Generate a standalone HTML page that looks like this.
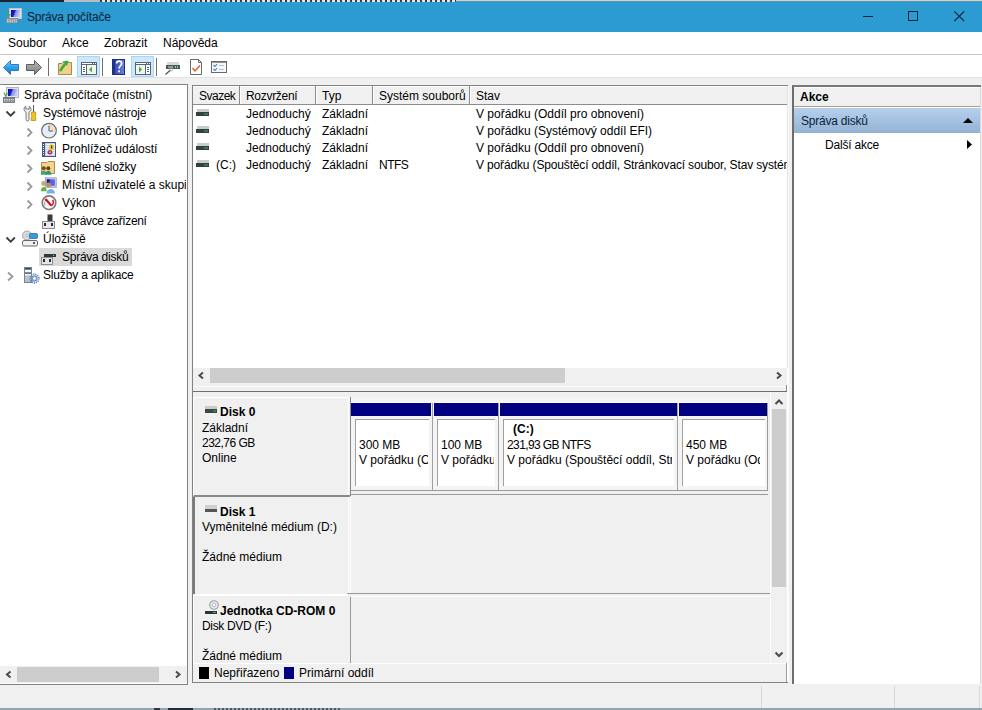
<!DOCTYPE html>
<html><head><meta charset="utf-8">
<style>
*{margin:0;padding:0;box-sizing:border-box}
html,body{width:982px;height:710px;overflow:hidden;background:#f0f0f0;position:relative;font-family:"Liberation Sans",sans-serif;font-size:12px;color:#000}
.a{position:absolute}
.t{position:absolute;white-space:nowrap;line-height:14px;font-size:12px}
.b{font-weight:bold}
svg{position:absolute;overflow:visible}
</style></head><body>

<!-- top strip from window behind -->
<div class="a" style="left:0;top:0;width:982px;height:2px;background:#2b9bd1"></div>
<div class="a" style="left:0;top:0;width:64px;height:2px;background:#1c2430"></div>
<div class="a" style="left:64px;top:0;width:36px;height:2px;background:#b8bcc0"></div>
<div class="a" style="left:100px;top:0;width:356px;height:2px;background:repeating-linear-gradient(90deg,#3a3e44 0 2px,#e4e6e8 2px 5px)"></div>
<div class="a" style="left:456px;top:0;width:526px;height:1px;background:#c4d6de"></div>
<div class="a" style="left:456px;top:1px;width:526px;height:1px;background:#6590a6"></div>

<!-- title bar -->
<div class="a" style="left:0;top:2px;width:982px;height:30px;background:#2b9bd1"></div>
<div class="t" style="left:27px;top:10px;color:#0b1d38;letter-spacing:-0.2px">Správa počítače</div>

<!-- menu bar -->
<div class="a" style="left:0;top:32px;width:982px;height:22px;background:#fff"></div>
<div class="a" style="left:0;top:54px;width:982px;height:1px;background:#c8c8c8"></div>
<div class="t" style="left:8px;top:36px">Soubor</div>
<div class="t" style="left:62px;top:36px">Akce</div>
<div class="t" style="left:104px;top:36px">Zobrazit</div>
<div class="t" style="left:163px;top:36px">Nápověda</div>

<!-- toolbar -->
<div class="a" style="left:0;top:55px;width:982px;height:22px;background:#fff"></div>
<div class="a" style="left:0;top:77px;width:982px;height:1px;background:#e3e3e3"></div>

<!-- left panel -->
<div class="a" style="left:0;top:84px;width:188px;height:601px;background:#fff;border-top:1px solid #828282;border-right:1px solid #828282;border-bottom:1px solid #828282"></div>

<!-- middle panel -->
<div class="a" style="left:192px;top:85px;width:596px;height:598px;background:#fff;border:1px solid #828282;border-right:none"></div>

<!-- actions panel -->
<div class="a" style="left:792px;top:85px;width:189px;height:599px;background:#fff;border-top:2px solid #7a7a7a;border-left:2px solid #6e6e6e"></div>
<div class="a" style="left:788px;top:86px;width:1px;height:596px;background:#fafafa"></div>


<!-- window controls -->
<div class="a" style="left:863px;top:16px;width:10px;height:1px;background:#0b1d38"></div>
<div class="a" style="left:908px;top:11px;width:10px;height:10px;border:1px solid #0b1d38"></div>
<svg style="left:954px;top:11px" width="11" height="11"><path d="M0.3 0.3L10.2 10.2M10.2 0.3L0.3 10.2" stroke="#0b1d38" stroke-width="1.1"/></svg>

<!-- tree -->
<div class="t" style="left:24px;top:88px;letter-spacing:-0.11px">Správa počítače (místní)</div>
<div class="t" style="left:43px;top:106px;letter-spacing:-0.11px">Systémové nástroje</div>
<div class="t" style="left:62px;top:124px">Plánovač úloh</div>
<div class="t" style="left:62px;top:142px">Prohlížeč událostí</div>
<div class="t" style="left:62px;top:160px;letter-spacing:-0.24px">Sdílené složky</div>
<div class="a" style="left:60px;top:175px;width:126px;height:18px;overflow:hidden"><div class="t" style="left:2px;top:3px">Místní uživatelé a skupiny</div></div>
<div class="t" style="left:62px;top:196px">Výkon</div>
<div class="t" style="left:62px;top:214px;letter-spacing:-0.34px">Správce zařízení</div>
<div class="t" style="left:43px;top:232px">Úložiště</div>
<div class="a" style="left:39px;top:248px;width:93px;height:18px;background:#d9d9d9"></div>
<div class="t" style="left:62px;top:250px;letter-spacing:-0.25px">Správa disků</div>
<div class="t" style="left:43px;top:268px;letter-spacing:-0.17px">Služby a aplikace</div>

<!-- list header -->
<div class="a" style="left:193px;top:86px;width:594px;height:19px;background:#f0f0f0;border-top:1px solid #fff;border-bottom:1px solid #8c8c8c"></div>
<div class="t" style="left:199px;top:89px;letter-spacing:-0.5px">Svazek</div>
<div class="t" style="left:246px;top:89px;letter-spacing:-0.3px">Rozvržení</div>
<div class="t" style="left:322px;top:89px">Typ</div>
<div class="t" style="left:379px;top:89px">Systém souborů</div>
<div class="t" style="left:476px;top:89px">Stav</div>
<div class="a" style="left:239px;top:86px;width:1px;height:18px;background:#8c8c8c"></div><div class="a" style="left:240px;top:86px;width:1px;height:18px;background:#fff"></div>
<div class="a" style="left:315px;top:86px;width:1px;height:18px;background:#8c8c8c"></div><div class="a" style="left:316px;top:86px;width:1px;height:18px;background:#fff"></div>
<div class="a" style="left:372px;top:86px;width:1px;height:18px;background:#8c8c8c"></div><div class="a" style="left:373px;top:86px;width:1px;height:18px;background:#fff"></div>
<div class="a" style="left:469px;top:86px;width:1px;height:18px;background:#8c8c8c"></div><div class="a" style="left:470px;top:86px;width:1px;height:18px;background:#fff"></div>

<!-- list rows -->
<div class="t" style="left:246px;top:107px">Jednoduchý</div>
<div class="t" style="left:322px;top:107px">Základní</div>
<div class="t" style="left:476px;top:107px">V pořádku (Oddíl pro obnovení)</div>
<div class="t" style="left:246px;top:124px">Jednoduchý</div>
<div class="t" style="left:322px;top:124px">Základní</div>
<div class="t" style="left:476px;top:124px">V pořádku (Systémový oddíl EFI)</div>
<div class="t" style="left:246px;top:141px">Jednoduchý</div>
<div class="t" style="left:322px;top:141px">Základní</div>
<div class="t" style="left:476px;top:141px">V pořádku (Oddíl pro obnovení)</div>
<div class="t" style="left:216px;top:158px">(C:)</div>
<div class="t" style="left:246px;top:158px">Jednoduchý</div>
<div class="t" style="left:322px;top:158px">Základní</div>
<div class="t" style="left:379px;top:158px;letter-spacing:-0.5px">NTFS</div>
<div class="a" style="left:470px;top:155px;width:317px;height:18px;overflow:hidden"><div class="t" style="left:6px;top:3px;letter-spacing:-0.15px">V pořádku (Spouštěcí oddíl, Stránkovací soubor, Stav systému)</div></div>

<!-- list hscroll -->
<div class="a" style="left:193px;top:368px;width:594px;height:15px;background:#f0f0f0"></div>
<div class="a" style="left:210px;top:368px;width:355px;height:15px;background:#cdcdcd"></div>
<div class="a" style="left:193px;top:383px;width:594px;height:8px;background:#f0f0f0"></div>
<div class="a" style="left:193px;top:391px;width:594px;height:1px;background:#6e6e6e"></div>

<!-- disk area -->
<div class="a" style="left:193px;top:392px;width:594px;height:271px;background:#f0f0f0"></div>
<!-- disk0 label box (raised) -->
<div class="a" style="left:193px;top:397px;width:157px;height:100px;border-top:1px solid #fff;border-left:1px solid #fff;border-bottom:2px solid #8a8a8a"></div>
<div class="a" style="left:348px;top:397px;width:1px;height:97px;background:#fff"></div>
<div class="a" style="left:350px;top:397px;width:1px;height:99px;background:#8a8a8a"></div>
<!-- partition frame disk0 -->
<div class="a" style="left:351px;top:397px;width:417px;height:94px;background:#f4f4f4;border-bottom:1px solid #9a9a9a"></div>
<div class="a" style="left:767px;top:403px;width:1px;height:88px;background:#9a9a9a"></div>
<div class="a" style="left:351px;top:402px;width:416px;height:1px;background:#fff"></div>
<div class="a" style="left:351px;top:494px;width:417px;height:1px;background:#9a9a9a"></div>
<div class="a" style="left:432px;top:403px;width:1px;height:87px;background:#a0a0a0"></div>
<div class="a" style="left:498px;top:403px;width:1px;height:87px;background:#a0a0a0"></div>
<div class="a" style="left:677px;top:403px;width:1px;height:87px;background:#a0a0a0"></div>
<!-- disk1 label box (sunken) -->
<div class="a" style="left:193px;top:497px;width:2px;height:97px;background:#7a7a7a"></div>
<div class="a" style="left:195px;top:594px;width:153px;height:1px;background:#fff"></div>
<div class="a" style="left:348px;top:497px;width:1px;height:97px;background:#fff"></div>
<div class="a" style="left:350px;top:497px;width:1px;height:97px;background:#fff"></div>
<div class="a" style="left:347px;top:593px;width:424px;height:1px;background:#9a9a9a"></div>
<div class="a" style="left:351px;top:596px;width:420px;height:1px;background:#fff"></div>
<!-- cdrom label box (raised) -->
<div class="a" style="left:193px;top:595px;width:155px;height:1px;background:#fff"></div>
<div class="a" style="left:193px;top:595px;width:1px;height:68px;background:#fff"></div>
<div class="a" style="left:350px;top:597px;width:1px;height:66px;background:#9a9a9a"></div>

<!-- disk 0 label -->
<div class="t b" style="left:220px;top:405px">Disk 0</div>
<div class="t" style="left:202px;top:421px">Základní</div>
<div class="t" style="left:202px;top:436px;letter-spacing:-0.5px">232,76 GB</div>
<div class="t" style="left:202px;top:451px">Online</div>

<!-- partitions -->
<div class="a" style="left:351px;top:403px;width:80px;height:13px;background:#000080"></div>
<div class="a" style="left:434px;top:403px;width:64px;height:13px;background:#000080"></div>
<div class="a" style="left:500px;top:403px;width:177px;height:13px;background:#000080"></div>
<div class="a" style="left:679px;top:403px;width:88px;height:13px;background:#000080"></div>

<div class="a" style="left:355px;top:419px;width:74px;height:67px;background:#fff;border-top:1px solid #a0a0a0;border-left:1px solid #a0a0a0"></div>
<div class="a" style="left:437px;top:419px;width:58px;height:67px;background:#fff;border-top:1px solid #a0a0a0;border-left:1px solid #a0a0a0"></div>
<div class="a" style="left:503px;top:419px;width:171px;height:67px;background:#fff;border-top:1px solid #a0a0a0;border-left:1px solid #a0a0a0"></div>
<div class="a" style="left:682px;top:419px;width:83px;height:67px;background:#fff;border-top:1px solid #a0a0a0;border-left:1px solid #a0a0a0"></div>

<div class="a" style="left:358px;top:438px;width:70px;height:30px;overflow:hidden"><div class="t" style="left:1px;top:0">300 MB</div><div class="t" style="left:1px;top:15px">V pořádku (Oddíl pro obnovení)</div></div>
<div class="a" style="left:440px;top:438px;width:54px;height:30px;overflow:hidden"><div class="t" style="left:1px;top:0">100 MB</div><div class="t" style="left:1px;top:15px">V pořádku (Systémový oddíl EFI)</div></div>
<div class="t b" style="left:513px;top:422px">(C:)</div>
<div class="a" style="left:506px;top:438px;width:166px;height:30px;overflow:hidden"><div class="t" style="left:1px;top:0;letter-spacing:-0.6px">231,93 GB NTFS</div><div class="t" style="left:1px;top:15px">V pořádku (Spouštěcí oddíl, Stránkovací soubor)</div></div>
<div class="a" style="left:685px;top:438px;width:75px;height:30px;overflow:hidden"><div class="t" style="left:1px;top:0">450 MB</div><div class="t" style="left:1px;top:15px">V pořádku (Oddíl pro obnovení)</div></div>

<!-- disk 1 label -->
<div class="t b" style="left:220px;top:505px">Disk 1</div>
<div class="t" style="left:202px;top:520px">Vyměnitelné médium (D:)</div>
<div class="t" style="left:202px;top:550px">Žádné médium</div>

<!-- cd-rom label -->
<div class="t b" style="left:220px;top:604px">Jednotka CD-ROM 0</div>
<div class="t" style="left:202px;top:619px;letter-spacing:-0.35px">Disk DVD (F:)</div>
<div class="t" style="left:202px;top:649px">Žádné médium</div>

<!-- vscroll -->
<div class="a" style="left:771px;top:392px;width:15px;height:271px;background:#f0f0f0"></div>
<div class="a" style="left:770px;top:392px;width:1px;height:271px;background:#fcfcfc"></div>
<div class="a" style="left:772px;top:409px;width:14px;height:178px;background:#cdcdcd"></div>

<!-- legend -->
<div class="a" style="left:193px;top:663px;width:594px;height:19px;background:#f0f0f0;border-top:1px solid #fff"></div>
<div class="a" style="left:199px;top:667px;width:10px;height:12px;background:#000"></div>
<div class="t" style="left:214px;top:666px">Nepřiřazeno</div>
<div class="a" style="left:284px;top:667px;width:10px;height:12px;background:#000080"></div>
<div class="t" style="left:299px;top:666px">Primární oddíl</div>

<!-- actions -->
<div class="a" style="left:794px;top:87px;width:186px;height:20px;background:linear-gradient(#fafafa 0 1px,#f0f0f0 1px);border-bottom:1px solid #a0a0a0"></div>
<div class="t b" style="left:800px;top:90px">Akce</div>
<div class="a" style="left:794px;top:108px;width:186px;height:25px;background:linear-gradient(#bccbdc 0 1px,#b4cfec 1px,#94b4d6 24px,#9aacc6 24px)"></div>
<div class="t" style="left:801px;top:114px;color:#0b1d38;letter-spacing:-0.22px">Správa disků</div>
<div class="t" style="left:825px;top:138px;letter-spacing:-0.2px">Další akce</div>

<!-- left hscroll -->
<div class="a" style="left:0;top:666px;width:187px;height:17px;background:#f0f0f0"></div>
<div class="a" style="left:17px;top:667px;width:142px;height:15px;background:#cdcdcd"></div>


<!-- ===== ICONS ===== -->
<!-- title icon -->
<svg style="left:3px;top:5px" width="20" height="20">
 <defs><linearGradient id="gscr2" x1="0" y1="0" x2="1" y2="0.3"><stop offset="0" stop-color="#0808a0"/><stop offset="0.45" stop-color="#2020c0"/><stop offset="0.55" stop-color="#8088e8"/><stop offset="1" stop-color="#c0c8f8"/></linearGradient></defs>
 <rect x="6.5" y="3.5" width="12" height="10" fill="#dfe2ea" stroke="#c0c4cc"/>
 <rect x="8" y="5" width="9" height="7" fill="url(#gscr2)"/>
 <rect x="3" y="13" width="12" height="5" fill="#8a8e94"/>
 <path d="M4 15H14M4 16.8H14" stroke="#f0f0f0" stroke-width="0.9" stroke-dasharray="1.5 0.8"/>
 <path d="M4 8.5L5.5 12L7.5 9" stroke="#4aa84a" stroke-width="1.2" fill="none"/>
</svg>

<!-- toolbar icons -->
<svg style="left:0;top:55px" width="240" height="22">
 <!-- back arrow -->
 <defs>
  <linearGradient id="gb" x1="0" y1="0" x2="0" y2="1"><stop offset="0" stop-color="#7fd0ff"/><stop offset="0.5" stop-color="#2aa2ea"/><stop offset="1" stop-color="#1677c6"/></linearGradient>
  <linearGradient id="gg" x1="0" y1="0" x2="0" y2="1"><stop offset="0" stop-color="#bdbdbd"/><stop offset="1" stop-color="#7a7a7a"/></linearGradient>
  <linearGradient id="gh" x1="0" y1="0" x2="1" y2="0"><stop offset="0" stop-color="#2a3f9c"/><stop offset="1" stop-color="#6a84e0"/></linearGradient>
 </defs>
 <path d="M3.5 12.5L10.5 5.5V9.5H18.5V15.5H10.5V19.5Z" fill="url(#gb)" stroke="#3a78b8" stroke-linejoin="round"/>
 <path d="M41.5 12.5L34.5 5.5V9.5H26.5V15.5H34.5V19.5Z" fill="url(#gg)" stroke="#5c5c5c" stroke-linejoin="round"/>
 <rect x="48" y="3" width="1" height="18" fill="#707070"/>
 <!-- folder up -->
 <path d="M58.5 8.5H62L63 7.5H71.5V19.5H58.5Z" fill="#f0d08a" stroke="#a88a4a"/>
 <path d="M60 16L65 9" stroke="#3aa83a" stroke-width="2.5"/>
 <path d="M62.5 6.5L68.5 5.5L67 11Z" fill="#3aa83a"/>
 <!-- pressed 1 -->
 <rect x="77.5" y="1.5" width="22" height="20" fill="#cce8ff" stroke="#a8d4fa"/>
 <rect x="81.5" y="7.5" width="15" height="12" fill="#fff" stroke="#5a6478"/>
 <rect x="82" y="9" width="14" height="1" fill="#5a6478"/>
 <rect x="92" y="8" width="1" height="1" fill="#5a6478"/><rect x="94" y="8" width="1" height="1" fill="#5a6478"/>
 <rect x="86" y="10" width="1" height="9" fill="#5a6478"/>
 <rect x="83" y="12" width="2" height="1" fill="#5a6478"/><rect x="83" y="14" width="2" height="1" fill="#5a6478"/><rect x="83" y="16" width="2" height="1" fill="#5a6478"/>
 <rect x="87" y="10" width="9" height="9" fill="#eef8ea"/>
 <path d="M92 11.5L89 14.5L92 17.5Z" fill="#4aa84a"/>
 <rect x="102" y="3" width="1" height="18" fill="#707070"/>
 <!-- help -->
 <rect x="112.5" y="4.5" width="12" height="15" fill="url(#gh)" stroke="#1e2f80"/>
 <rect x="113" y="5" width="2" height="14" fill="#1e3390"/>
 <path d="M116.6 8.6C116.6 5.4 121.6 5.4 121.6 8.6C121.6 10.8 119.1 10.8 119.1 13.6" stroke="#fff" stroke-width="1.7" fill="none"/>
 <rect x="118.2" y="15.4" width="1.8" height="1.8" fill="#fff"/>
 <!-- pressed 2 -->
 <rect x="131.5" y="1.5" width="22" height="20" fill="#cce8ff" stroke="#a8d4fa"/>
 <rect x="135.5" y="7.5" width="15" height="12" fill="#fff" stroke="#5a6478"/>
 <rect x="136" y="9" width="14" height="1" fill="#5a6478"/>
 <rect x="146" y="8" width="1" height="1" fill="#5a6478"/><rect x="148" y="8" width="1" height="1" fill="#5a6478"/>
 <rect x="145" y="10" width="1" height="9" fill="#5a6478"/>
 <rect x="147" y="12" width="2" height="1" fill="#5a6478"/><rect x="147" y="14" width="2" height="1" fill="#5a6478"/><rect x="147" y="16" width="2" height="1" fill="#5a6478"/>
 <rect x="136" y="10" width="9" height="9" fill="#eef8ea"/>
 <path d="M139 11.5L142 14.5L139 17.5Z" fill="#4aa84a"/>
 <rect x="156" y="3" width="1" height="18" fill="#707070"/>
 <!-- disk magnifier -->
 <rect x="167" y="7" width="12" height="3" fill="#d4d8d8"/>
 <rect x="166" y="10" width="14" height="4" fill="#4a5858"/>
 <rect x="168" y="11" width="5" height="2" fill="#8a9a9a"/>
 <rect x="175" y="11" width="1" height="2" fill="#7adc7a"/><rect x="177" y="11" width="1" height="2" fill="#7adc7a"/>
 <path d="M165.5 19.5L170.5 15" stroke="#4a4a4a" stroke-width="1.1"/>
 <circle cx="171" cy="14.5" r="1.6" fill="none" stroke="#9aa" stroke-width="0.8"/>
 <!-- doc check -->
 <path d="M190.5 4.5H198.5L201.5 7.5V19.5H190.5Z" fill="#fff" stroke="#6a6a6a"/>
 <path d="M198.5 4.5V7.5H201.5" fill="none" stroke="#6a6a6a"/>
 <path d="M192.5 13L195 16L200 10.5" stroke="#e05a2a" stroke-width="1.4" fill="none"/>
 <!-- checklist -->
 <rect x="211.5" y="6.5" width="15" height="11" fill="#f4f8fc" stroke="#6a6a6a"/>
 <rect x="211.5" y="6.5" width="15" height="1.2" fill="#6a6a6a"/>
 <path d="M213.5 10L215 11.5L217 9M213.5 14L215 15.5L217 13" stroke="#4a7ac0" stroke-width="1.1" fill="none"/>
 <rect x="219" y="10" width="5" height="1" fill="#b8c0c8"/><rect x="219" y="14" width="5" height="1" fill="#b8c0c8"/>
</svg>

<!-- tree icons -->
<svg style="left:0;top:84px" width="60" height="200">
 <!-- root -->
 <defs><linearGradient id="gscr" x1="0" y1="0" x2="1" y2="0.3"><stop offset="0" stop-color="#0808a0"/><stop offset="0.45" stop-color="#2020c0"/><stop offset="0.55" stop-color="#8088e8"/><stop offset="1" stop-color="#c0c8f8"/></linearGradient></defs>
 <rect x="6.5" y="3.5" width="12" height="10" fill="#dfe2ea" stroke="#b0b4bc"/>
 <rect x="8" y="5" width="9" height="7" fill="url(#gscr)"/>
 <rect x="3" y="13" width="12" height="6" fill="#7c8086"/>
 <path d="M4 15.5H14M4 17H14" stroke="#e8e8e8" stroke-width="0.9" stroke-dasharray="1.5 0.8"/>
 <path d="M4 8.5L5.5 12L7.5 9" stroke="#4aa84a" stroke-width="1.2" fill="none"/>
 <!-- chevron down (Systémové) -->
 <path d="M6.5 27.5L10.7 31.7L14.9 27.5" stroke="#3c3c3c" stroke-width="1.8" fill="none"/>
 <!-- tools -->
 <path d="M25.8 22.2A3.3 3.3 0 0 0 26 28.2V35.5A1.5 1.5 0 0 0 29 35.5V28.2A3.3 3.3 0 0 0 29.2 22.2V25H25.8Z" fill="#ececec" stroke="#6e6e6e" stroke-width="0.9"/>
 <rect x="33" y="21" width="1" height="7" fill="#5a5a5a"/>
 <path d="M31.5 28H35.5L35.8 31L35 32L35.8 33.5V36.5H31.2V33.5L32 32L31.2 31Z" fill="#f0c418" stroke="#a88810" stroke-width="0.7"/>
 <!-- chevrons right level2 -->
 <path d="M27.5 44.5L31.5 48.5L27.5 52.5" stroke="#9a9a9a" stroke-width="1.8" fill="none"/>
 <path d="M27.5 62.5L31.5 66.5L27.5 70.5" stroke="#9a9a9a" stroke-width="1.8" fill="none"/>
 <path d="M27.5 80.5L31.5 84.5L27.5 88.5" stroke="#9a9a9a" stroke-width="1.8" fill="none"/>
 <path d="M27.5 98.5L31.5 102.5L27.5 106.5" stroke="#9a9a9a" stroke-width="1.8" fill="none"/>
 <path d="M27.5 116.5L31.5 120.5L27.5 124.5" stroke="#9a9a9a" stroke-width="1.8" fill="none"/>
 <!-- clock -->
 <circle cx="49" cy="46.7" r="7.3" fill="#e4eef8" stroke="#6e6e6e" stroke-width="1.2"/>
 <path d="M49 40.2A6.5 6.5 0 0 1 55.5 46.7H49Z" fill="#f4dcc0"/>
 <path d="M49 41.5V47H53" stroke="#506070" stroke-width="1" fill="none"/>
 <!-- event viewer -->
 <rect x="42.5" y="58.5" width="13" height="14" fill="#c4d2ea" stroke="#4a5878"/>
 <rect x="42" y="58" width="3" height="15" fill="#4a5878"/>
 <path d="M43.5 60V72" stroke="#e8eef8" stroke-width="1" stroke-dasharray="1 1"/>
 <path d="M46 60.5H55M46 62.5H55M46 64.5H55M46 66.5H55M46 68.5H55M46 70.5H55" stroke="#f4f8ff" stroke-width="0.9"/>
 <ellipse cx="51.5" cy="63.2" rx="2.6" ry="3" fill="#e4cc2c"/>
 <rect x="51" y="61.5" width="1.2" height="3" fill="#3a3010"/>
 <circle cx="50" cy="68.3" r="2.4" fill="#a83050"/>
 <circle cx="50" cy="68.3" r="1" fill="#f0a0b0"/>
 <!-- shared folders -->
 <path d="M41.5 78.5H47L48 77.5H54.5V89.5H41.5Z" fill="#f4d488" stroke="#a88a4a"/>
 <circle cx="43.8" cy="84.2" r="2" fill="#7a4a20"/><circle cx="48.3" cy="84.2" r="2" fill="#6a3e18"/>
 <path d="M40.8 90.8C40.8 85.5 46.8 85.5 46.8 90.8Z" fill="#3aa86a"/><path d="M45.5 90.8C45.5 85.5 51.3 85.5 51.3 90.8Z" fill="#2a9a6a"/>
 <!-- local users -->
 <rect x="45.3" y="93.8" width="11" height="9.5" fill="#c8ccec" stroke="#a0a8c8"/>
 <rect x="46.8" y="95.3" width="8" height="6.5" fill="#6060e0"/><rect x="46.8" y="95.3" width="3" height="6.5" fill="#1a1aa0"/>
 <circle cx="43.7" cy="99.5" r="2.4" fill="#c8a870"/>
 <path d="M40.8 107.2C40.8 101.5 46.8 101.5 46.8 107.2Z" fill="#6ab04a"/>
 <circle cx="48.7" cy="101" r="2.4" fill="#b89060"/>
 <path d="M46.5 109.6C46.5 103.5 55 103.5 55 109.6Z" fill="#7aaee0"/>
 <!-- performance -->
 <circle cx="49" cy="118.7" r="6.8" fill="#fbf8f8" stroke="#7a7a7a" stroke-width="1.6"/>
 <path d="M45.8 115.2L51.2 121.6" stroke="#c8102a" stroke-width="2.2" fill="none"/>
 <path d="M51.2 121.8C53.6 120.6 54 118 52.6 115.8" stroke="#c8102a" stroke-width="1.4" fill="none"/>
 <path d="M45.2 116.5L46.5 115.2" stroke="#c8102a" stroke-width="1.8"/>
 <path d="M45.3 121.5C44.3 120.2 44.3 118.6 45 117.6" stroke="#7a8a7a" stroke-width="1" fill="none"/>
 <!-- device manager -->
 <rect x="47.5" y="130.5" width="5" height="7" fill="#3a3a3a"/>
 <rect x="42.5" y="137.5" width="12" height="7" fill="#e8e8ee" stroke="#8a8a8a"/>
 <rect x="44" y="139" width="2" height="3" fill="#2a2a2a"/><rect x="51" y="139" width="2" height="3" fill="#2a2a2a"/>
 <!-- chevron down storage -->
 <path d="M6.5 153.5L10.7 157.7L14.9 153.5" stroke="#3c3c3c" stroke-width="1.8" fill="none"/>
 <!-- storage -->
 <circle cx="27" cy="151.5" r="4.5" fill="#d8dce0" stroke="#a0a4a8"/>
 <circle cx="27" cy="151.5" r="1.2" fill="#fff" stroke="#8a8a8a" stroke-width="0.6"/>
 <rect x="29.5" y="149.5" width="8" height="5" rx="1" fill="#3a9ae0" stroke="#2a6aa8" stroke-width="0.8"/>
 <rect x="22.5" y="156.5" width="15" height="5.5" rx="1.5" fill="#f0f0f0" stroke="#6a6a6a"/>
 <rect x="33" y="158" width="2" height="2" fill="#5a5a5a"/>
 <!-- disk management (selected) -->
 <rect x="44" y="170" width="12" height="3" fill="#2e3a38"/>
 <rect x="53" y="171" width="1" height="1" fill="#6adc6a"/>
 <rect x="41.5" y="173.5" width="11" height="7" fill="#e4e4e8" stroke="#7a7a7a" stroke-width="0.8"/>
 <rect x="43" y="175" width="2" height="3" fill="#2a2a2a"/><rect x="49" y="175" width="2" height="3" fill="#2a2a2a"/>
 <!-- services chevron -->
 <path d="M8 188.5L12.5 192.5L8 196.5" stroke="#9a9a9a" stroke-width="1.8" fill="none"/>
 <!-- services -->
 <rect x="24.5" y="183.5" width="7" height="15" fill="#b8c2cc" stroke="#7a8490"/>
 <rect x="25" y="184" width="6" height="1.5" fill="#3a4450"/><rect x="25" y="186" width="6" height="2" fill="#f4f6f8"/><rect x="25" y="188.5" width="6" height="1.2" fill="#4a5460"/><rect x="25" y="190" width="6" height="1.5" fill="#f0f2f4"/>
 <circle cx="34.5" cy="194.5" r="4.4" fill="none" stroke="#5a84b8" stroke-width="1.6" stroke-dasharray="1.2 0.9"/>
 <circle cx="34.5" cy="194.5" r="3.2" fill="#7a9cc8"/>
 <circle cx="34.5" cy="194.5" r="1.4" fill="#f4f8ff"/>
</svg>

<!-- list icons -->
<svg style="left:196px;top:108px" width="16" height="64">
 <g id="dk"><rect x="1" y="1" width="12" height="3" fill="#c8cccc"/><rect x="0" y="4" width="13" height="4" fill="#34403e"/><rect x="8" y="5.5" width="4" height="1" fill="#48a858"/></g>
 <use href="#dk" y="17"/><use href="#dk" y="34"/><use href="#dk" y="51"/>
</svg>

<!-- disk label icons -->
<svg style="left:205px;top:406px" width="16" height="12">
 <rect x="0" y="0" width="12" height="3" fill="#c8cccc"/><rect x="0" y="3" width="12" height="4" fill="#3a4644"/><rect x="8" y="4.5" width="3" height="1" fill="#48a858"/>
</svg>
<svg style="left:205px;top:505px" width="14" height="8">
 <rect x="0" y="0" width="12" height="4" fill="#cfcfcf"/><rect x="0" y="4" width="12" height="3" fill="#555"/>
</svg>
<svg style="left:204px;top:600px" width="16" height="16">
 <circle cx="10" cy="5" r="4.3" fill="#e8eaec" stroke="#9a9ea2" stroke-width="1.1"/>
 <circle cx="10" cy="5" r="1.8" fill="#fff" stroke="#a8b0c0" stroke-width="0.9"/>
 <rect x="1" y="11" width="12" height="3" fill="#263832"/><rect x="9" y="12" width="3" height="1" fill="#6a9a7a"/>
</svg>

<!-- action triangles -->
<svg style="left:963px;top:117px" width="12" height="8"><path d="M0 6H10L5 1Z" fill="#000"/></svg>
<svg style="left:966px;top:140px" width="8" height="12"><path d="M1 0V9L6 4.5Z" fill="#000"/></svg>

<!-- scroll arrows -->
<svg style="left:0;top:660px" width="190" height="20"><path d="M10.5 11.5L7 14.5L10.5 17.5" stroke="#4a4a4a" stroke-width="2" fill="none"/><path d="M176 11.5L179.5 14.5L176 17.5" stroke="#4a4a4a" stroke-width="2" fill="none"/></svg>
<svg style="left:193px;top:365px" width="594" height="20"><path d="M10 7.5L6.5 10.5L10 13.5" stroke="#4a4a4a" stroke-width="2" fill="none"/><path d="M584 7.5L587.5 10.5L584 13.5" stroke="#4a4a4a" stroke-width="2" fill="none"/></svg>
<svg style="left:771px;top:392px" width="16" height="271"><path d="M4.5 12L8 8.5L11.5 12" stroke="#4a4a4a" stroke-width="2" fill="none"/><path d="M4.5 260.5L8 264L11.5 260.5" stroke="#4a4a4a" stroke-width="2" fill="none"/></svg>

<div class="a" style="left:980px;top:87px;width:1px;height:597px;background:#dadada"></div>
<div class="a" style="left:787px;top:86px;width:1px;height:282px;background:#e4e4e4"></div>
<div class="a" style="left:786px;top:663px;width:1px;height:19px;background:#9a9a9a"></div>
<div class="a" style="left:786px;top:385px;width:1px;height:6px;background:#8a8a8a"></div>
<div class="a" style="left:193px;top:386px;width:593px;height:1px;background:#fafafa"></div>
<!-- status bar -->
<div class="a" style="left:761px;top:686px;width:1px;height:22px;background:#d8d8d8"></div>
<div class="a" style="left:894px;top:686px;width:1px;height:22px;background:#d8d8d8"></div>
<div class="a" style="left:979px;top:686px;width:1px;height:22px;background:#d8d8d8"></div>
<div class="a" style="left:0;top:708px;width:982px;height:2px;background:#8fa6b0"></div>
<div class="a" style="left:154px;top:708px;width:6px;height:2px;background:#2a3a44"></div>
<div class="a" style="left:168px;top:708px;width:25px;height:2px;background:#1e2e3a"></div>
<div class="a" style="left:214px;top:708px;width:126px;height:2px;background:repeating-linear-gradient(90deg,#4a5a64 0 2px,#8fa6b0 2px 4px)"></div>

</body></html>
